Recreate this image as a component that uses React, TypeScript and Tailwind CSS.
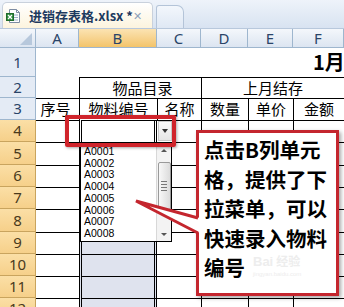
import React from "react";

function ExcelIcon() {
  return (
    <svg width="15" height="16" viewBox="0 0 15 16" className="shrink-0">
      <path d="M3.5 1.5h7l3 3v10h-10z" fill="#fff" stroke="#7d8ca3" />
      <path d="M10.5 1.5v3h3" fill="none" stroke="#7d8ca3" />
      <line x1="8" y1="7" x2="12" y2="7" stroke="#9bb0c8" />
      <line x1="8" y1="9.5" x2="12" y2="9.5" stroke="#9bb0c8" />
      <line x1="8" y1="12" x2="12" y2="12" stroke="#9bb0c8" />
      <rect x="0.5" y="5.5" width="7" height="7" fill="#2f8a3c" stroke="#1f6b2b" />
      <line x1="2" y1="7" x2="6" y2="11" stroke="#fff" strokeWidth="1.3" />
      <line x1="6" y1="7" x2="2" y2="11" stroke="#fff" strokeWidth="1.3" />
    </svg>
  );
}

const rowHeights = [
  { n: 4, tall: false },
  { n: 5, tall: true },
  { n: 6, tall: false },
  { n: 7, tall: false },
  { n: 8, tall: true },
  { n: 9, tall: false },
  { n: 10, tall: false },
  { n: 11, tall: false },
  { n: 12, tall: false },
];

const items = ["A0001", "A0002", "A0003", "A0004", "A0005", "A0006", "A0007", "A0008"];

export default function App() {
  return (
    <div className="relative w-[344px] h-[307px] overflow-hidden bg-white font-['Noto_Sans','Noto_Sans_CJK_SC',sans-serif]">
      {/* tab bar */}
      <div className="flex items-end h-[29px] pl-[2px] bg-gradient-to-b from-[#eef3fa] to-[#d8e3f1] border-b border-[#b8c8dc]">
        <div className="flex items-center h-[26px] w-[151px] rounded-t-[5px] border border-b-0 border-[#c9d1dc] bg-gradient-to-b from-white to-[#fcf4de] pl-[3px] pr-[10px]">
          <ExcelIcon />
          <span className="ml-[8px] text-[13px] font-bold text-[#1d3a5f] font-['Noto_Sans_CJK_SC',sans-serif] whitespace-nowrap leading-none">
            进销存表格.xlsx *
          </span>
          <span className="ml-auto text-[11px] text-[#8da2bb] leading-none">✕</span>
        </div>
        <div className="ml-[3px] h-[23px] w-[28px] rounded-tr-[7px] rounded-tl-[3px] border border-b-0 border-[#b4c4d8] bg-gradient-to-b from-[#f3f7fc] to-[#dfe8f4]" />
      </div>

      {/* column headers */}
      <div className="flex h-[19px] text-[15px] leading-none text-[#2a4468] bg-gradient-to-b from-[#f4f7fb] to-[#dce5f1] border-b border-[#9eb6ce]">
        <div className="relative w-[36px] shrink-0 border-r border-[#9eb6ce]">
          <div className="absolute right-[3px] bottom-[2px] w-0 h-0 border-l-[12px] border-l-transparent border-b-[12px] border-b-[#b7c8dc]" />
        </div>
        <div className="w-[43px] shrink-0 border-r border-[#9eb6ce] flex items-center justify-center">A</div>
        <div className="w-[78px] shrink-0 border-r border-[#9eb6ce] flex items-center justify-center bg-gradient-to-b from-[#fbe3b2] to-[#f3c46a]">B</div>
        <div className="w-[44px] shrink-0 border-r border-[#9eb6ce] flex items-center justify-center">C</div>
        <div className="w-[47px] shrink-0 border-r border-[#9eb6ce] flex items-center justify-center">D</div>
        <div className="w-[45px] shrink-0 border-r border-[#9eb6ce] flex items-center justify-center">E</div>
        <div className="w-[51px] shrink-0 border-r border-[#9eb6ce] flex items-center justify-center">F</div>
      </div>

      {/* row 1 */}
      <div className="flex h-[29px]">
        <div className="w-[36px] shrink-0 border-r border-b border-[#9eb6ce] bg-[#e4ebf5] flex items-center justify-center text-[15px] text-[#2a4468]">1</div>
        <div className="flex-1 flex items-start pl-[277px] pt-[4px]">
          <span className="text-[20px] font-bold text-black leading-[20px] font-['Noto_Sans_CJK_SC',sans-serif] whitespace-nowrap">1月</span>
        </div>
      </div>

      {/* row 2 */}
      <div className="flex h-[21px] text-[15px] text-black font-['Noto_Sans_CJK_SC',sans-serif]">
        <div className="w-[36px] shrink-0 border-r border-b border-[#9eb6ce] bg-[#e4ebf5] flex items-center justify-center text-[15px] text-[#2a4468] font-['Noto_Sans',sans-serif]">2</div>
        <div className="w-[43px] shrink-0" />
        <div className="w-[122px] shrink-0 border-t border-l border-black flex items-center justify-center pl-[4px]">物品目录</div>
        <div className="w-[143px] shrink-0 border-t border-l border-black flex items-center justify-center">上月结存</div>
      </div>

      {/* row 3 */}
      <div className="flex h-[22px] text-[15px] text-black font-['Noto_Sans_CJK_SC',sans-serif]">
        <div className="w-[36px] shrink-0 border-r border-b border-[#9eb6ce] bg-[#e4ebf5] flex items-center justify-center text-[15px] text-[#2a4468] font-['Noto_Sans',sans-serif]">3</div>
        <div className="w-[43px] shrink-0 border-t border-black flex items-center justify-center pr-[4px]">序号</div>
        <div className="w-[78px] shrink-0 border-t border-l border-black flex items-center justify-center">物料编号</div>
        <div className="w-[44px] shrink-0 border-t border-l border-black flex items-center justify-center whitespace-nowrap">名称</div>
        <div className="w-[47px] shrink-0 border-t border-l border-black flex items-center justify-center">数量</div>
        <div className="w-[45px] shrink-0 border-t border-l border-black flex items-center justify-center">单价</div>
        <div className="w-[51px] shrink-0 border-t border-l border-black flex items-center justify-center">金额</div>
      </div>

      {/* rows 4-12 */}
      {rowHeights.map((r) => (
        <div key={r.n} className={r.tall ? "flex h-[23px]" : "flex h-[22px]"}>
          <div className="w-[36px] shrink-0 border-r border-b border-[#c9a45e] bg-gradient-to-b from-[#fbdfa6] to-[#f6d08a] flex items-center justify-center text-[15px] text-[#4a3a1c]">
            {r.n}
          </div>
          <div className="w-[43px] shrink-0 border-t border-black" />
          <div
            className={
              r.n === 4
                ? "w-[78px] shrink-0 border-t border-x-[3px] border-double border-black bg-white"
                : "w-[78px] shrink-0 border-t border-x-[3px] border-double border-black bg-[#dfe3ee]"
            }
          />
          <div className="w-[44px] shrink-0 border-t border-black" />
          <div className="w-[47px] shrink-0 border-t border-l border-black" />
          <div className="w-[45px] shrink-0 border-t border-l border-black" />
          <div className="w-[51px] shrink-0 border-t border-l border-black" />
        </div>
      ))}

      {/* dropdown button for B4 */}
      <div className="absolute left-[158px] top-[121px] w-[14px] h-[20px] bg-gradient-to-b from-[#fafafa] to-[#e6e6e6] border border-[#c8c8c8] flex items-center justify-center">
        <div className="w-0 h-0 border-l-[3.5px] border-r-[3.5px] border-t-[4px] border-l-transparent border-r-transparent border-t-[#333]" />
      </div>

      {/* dropdown list */}
      <div className="absolute left-[79px] top-[142px] w-[93px] h-[100px] bg-white border border-black border-l-2 flex">
        <div className="flex-1 pt-[3px] pl-[3px] font-['Liberation_Sans',sans-serif] text-[10.5px] leading-[11.7px] text-black">
          {items.map((it) => (
            <div key={it}>{it}</div>
          ))}
        </div>
        <div className="w-[15px] h-full border-l border-[#d8d8d8] bg-[#f3f3f3] flex flex-col items-center">
          <div className="h-[14px] flex items-center justify-center">
            <div className="w-0 h-0 border-l-[3px] border-r-[3px] border-b-[3px] border-l-transparent border-r-transparent border-b-[#555]" />
          </div>
          <div className="mt-[5px] w-[13px] h-[48px] rounded-[2px] border border-[#9a9a9a] bg-gradient-to-r from-[#f8f8f8] to-[#dcdcdc] flex flex-col items-center justify-center gap-[2px]">
            <div className="w-[6px] h-px bg-[#777]" />
            <div className="w-[6px] h-px bg-[#777]" />
            <div className="w-[6px] h-px bg-[#777]" />
            <div className="w-[6px] h-px bg-[#777]" />
          </div>
          <div className="mt-auto h-[14px] flex items-center justify-center">
            <div className="w-0 h-0 border-l-[3px] border-r-[3px] border-t-[3px] border-l-transparent border-r-transparent border-t-[#555]" />
          </div>
        </div>
      </div>

      {/* red highlight rectangle */}
      <div className="absolute left-[65px] top-[115px] w-[111px] h-[32px] border-[4px] border-[#d0242b] rounded-[2px] shadow-[1px_1px_3px_rgba(0,0,0,0.35)]" />

      {/* callout box */}
      <div className="absolute left-[196px] top-[130px] w-[143px] h-[166px] bg-white border-[3px] border-[#c4262e] shadow-[2px_2px_4px_rgba(0,0,0,0.35)] pl-[5px] pt-[2px]">
        <div className="absolute left-[54px] top-[122px] text-[#ededed] leading-none">
          <div className="text-[13px] font-bold font-['Liberation_Sans',sans-serif]">
            Bai<span className="ml-[3px] font-['Noto_Sans_CJK_SC',sans-serif] text-[12px]">经验</span>
          </div>
          <div className="mt-[3px] text-[6px] font-['Liberation_Sans',sans-serif]">jingyan.baidu.com</div>
        </div>
        <div className="relative text-[20.5px] leading-[29.5px] font-bold text-black font-['Noto_Sans_CJK_SC',sans-serif] whitespace-nowrap">
          点击B列单元
          <br />
          格，提供了下
          <br />
          拉菜单，可以
          <br />
          快速录入物料
          <br />
          编号
        </div>
      </div>

      {/* callout tail */}
      <svg className="absolute left-0 top-0" width="344" height="307" viewBox="0 0 344 307">
        <polygon points="136,201 200,218 200,233" fill="#fff" />
        <path d="M198,218 L136,201 L198,233" fill="none" stroke="#c4262e" strokeWidth="3" strokeLinejoin="miter" />
      </svg>
    </div>
  );
}
